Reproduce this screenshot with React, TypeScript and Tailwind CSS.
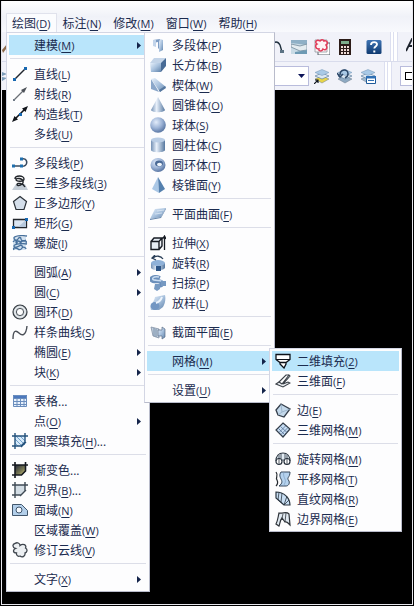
import React, { useState } from 'react';

interface MenuEntry {
  label: string;
  accel?: string;
  suffix?: string;
  icon?: React.ReactNode;
  arrow?: boolean;
  children?: MenuEntry[][];
}

const BLUE = 'url(#steel)';
const BLUE_H = 'url(#steelH)';
const DARK = '#26303c';

function Icon({ children }: { children: React.ReactNode }) {
  return (
    <svg className="size-4 shrink-0" viewBox="0 0 16 16" fill="none" aria-hidden="true">
      {children}
    </svg>
  );
}

// shared gradients for all icons
function Gradients() {
  return (
    <svg className="absolute size-0" aria-hidden="true">
      <defs>
        <linearGradient id="steel" x1="0" y1="0" x2="1" y2="1">
          <stop offset="0" stopColor="#e8f1fb" />
          <stop offset="0.5" stopColor="#a9c2de" />
          <stop offset="1" stopColor="#5f82aa" />
        </linearGradient>
        <linearGradient id="steelH" x1="0" y1="0" x2="1" y2="0">
          <stop offset="0" stopColor="#7390b4" />
          <stop offset="0.4" stopColor="#e9f1fb" />
          <stop offset="1" stopColor="#55779f" />
        </linearGradient>
        <radialGradient id="ball" cx="0.38" cy="0.32" r="0.7">
          <stop offset="0" stopColor="#e2ecfa" />
          <stop offset="0.55" stopColor="#9cb3d6" />
          <stop offset="1" stopColor="#5875a2" />
        </radialGradient>
        <linearGradient id="olive" x1="0" y1="0" x2="1" y2="1">
          <stop offset="0" stopColor="#23283c" />
          <stop offset="0.6" stopColor="#7d7d55" />
          <stop offset="1" stopColor="#e0d890" />
        </linearGradient>
        <linearGradient id="navy" x1="0" y1="0" x2="0" y2="1">
          <stop offset="0" stopColor="#3f74b4" />
          <stop offset="1" stopColor="#0f3a70" />
        </linearGradient>
      </defs>
    </svg>
  );
}

const icons = {
  line: (
    <Icon>
      <path d="M2 14 14 2" stroke="#20262e" strokeWidth="1.5" />
      <path d="M1 12h3v3H1zM12 1h3v3h-3z" fill="#1767b0" />
    </Icon>
  ),
  ray: (
    <Icon>
      <path d="M2 14 12 4" stroke="#6a6f76" strokeWidth="1.3" />
      <path d="m15 1-6 3 3 3z" fill="#4c5158" />
      <path d="M1 13h2v2H1z" fill="#707a86" />
    </Icon>
  ),
  xline: (
    <Icon>
      <path d="M3 13 13 3" stroke="#10141a" strokeWidth="1.6" />
      <path d="m16 0-6 2.500 3.500 3.500zM0 16l6-2.500L2.500 10z" fill="#10141a" />
      <path d="M7 7h3v3H7z" fill="#1767b0" />
    </Icon>
  ),
  pline: (
    <Icon>
      <path d="M1 11h8M9 4c7-2 7 6 3 7l-3 .3" stroke="#38495e" strokeWidth="1.6" />
      <path d="M0 9.500h3v3H0zM8 9.500h3v3H8zM8 2.500h3v3H8z" fill="#1e6fae" />
    </Icon>
  ),
  pline3d: (
    <Icon>
      <path d="M4 9h9l3 6H0z" fill="#c3ccd6" />
      <path d="M3 4c0-4 9-4 9 0 0 3-8 3-8 .5C4 3 10 3 11 6c1 4-6 6-6 3.500C5 7.500 11 8 13 12" stroke="#20242a" strokeWidth="1.400" />
    </Icon>
  ),
  polygon: (
    <Icon>
      <path d="m8 1.500 6.500 5-2.500 8H4l-2.500-8z" fill="#d5dfeb" stroke="#2b3138" strokeWidth="1.2" />
    </Icon>
  ),
  rect: (
    <Icon>
      <path d="M1.500 4.500h13v8h-13z" fill="#dce6f2" stroke="#22262c" strokeWidth="1.3" />
      <path d="M14 5v7H6z" fill="#b6c8dc" />
      <path d="M13 3h3v3h-3zM0 11h3v3H0z" fill="#1767b0" />
    </Icon>
  ),
  helix: (
    <Icon>
      <path d="M1 2h13v13H1z" fill="#d3e2f0" />
      <path
        d="M15 1C9 0 2 1 2 3s3 3 4 1 3-2 3 0 3 2 5 1M1 7c2-3 5 0 4 1s-2-2 1-2 4 3 3 3-1-3 2-3 4 0 3 2M15 9c-4-1-13 0-13 2s4 1 5 0 4-1 3 1M2 15c-2-3 3-2 4-1s3 1 4-1 4 0 4 1"
        stroke="#47709c"
        strokeWidth="1.300"
      />
    </Icon>
  ),
  donut: (
    <Icon>
      <circle cx="8" cy="8" r="7" fill="#c9d0d6" stroke="#343a40" strokeWidth="1.200" />
      <circle cx="8" cy="8" r="5.200" stroke="#f1f4f6" />
      <circle cx="8" cy="8" r="3.600" fill="#fdfdfe" stroke="#4d545b" />
    </Icon>
  ),
  spline: (
    <Icon>
      <path d="M1 15C1 6 4 6 7 9s7 3 8-7" stroke="#4b5058" strokeWidth="1.400" />
    </Icon>
  ),
  table: (
    <Icon>
      <path d="M1 2h14v12H1z" fill="#e8f1fc" />
      <path d="M1 2h14v3H1z" fill="#4c78bd" />
      <path d="M1.500 2.500h13v11h-13zM1 5.500h14M1 8.500h14M1 11.500h14M5 5v9M8.500 5v9M12 5v9" stroke="#6a8dbd" />
    </Icon>
  ),
  hatch: (
    <Icon>
      <path d="M3 3h10v6l-4 4H3z" fill="#d7eafa" />
      <path d="m4 3 9 9M8 3l5 5M3 6l7 7M3 10l3 3" stroke="#73a3cd" />
      <path d="M3 0v16M0 3h16M13 0v9l-4 4H0M9 14l5-5" stroke="#24527c" strokeWidth="1.400" />
    </Icon>
  ),
  gradient: (
    <Icon>
      <path d="M3 3h11v6l-4 4H3z" fill="url(#olive)" />
      <path d="M3 0v16M0 3h16M13.500 0v9l-4 4H0" stroke="#14181f" strokeWidth="1.600" />
    </Icon>
  ),
  boundary: (
    <Icon>
      <path d="M3 3h10v6l-4 4H3z" fill="#d3dde5" />
      <path d="M3 0v16M0 3h16M13 0v9l-4 4H0M8 14l6-6" stroke="#3f4a55" strokeWidth="1.400" />
    </Icon>
  ),
  region: (
    <Icon>
      <path d="M.5 2.500h9l6 6v5H.5z" fill="#b3cfea" stroke="#41566c" />
      <circle cx="7" cy="8" r="3" fill="#f4f9ff" stroke="#41566c" />
    </Icon>
  ),
  cloud: (
    <Icon>
      <path
        d="M3.500 6.500C.5 6 0 2 3 1.500 5 0 8 1 8 3.500 11 1 15 3 13.500 6c2.500 1.500 1.500 4.500-.5 5 .5 3-2.500 5-5 3-2 1-4-1-3.500-3C1 11 .5 8 3.500 6.500z"
        fill="#eceff2"
        stroke="#3f464e"
        strokeWidth="1.300"
      />
    </Icon>
  ),
  polysolid: (
    <Icon>
      <path d="m3 3 7-1v8l-2 2V5L3 6z" fill="#7d9cc4" />
      <path d="m10 2 3 1v10l-4 2V5z" fill={BLUE} />
      <path d="M3 3h3v7l-3-1z" fill="#c2d4ea" />
    </Icon>
  ),
  box: (
    <Icon>
      <path d="m0 6 4-5h12l-4 5z" fill="#c3d4e8" />
      <path d="M0 6h11v9H1z" fill={BLUE} />
      <path d="m11 6 5-5v8l-5 6z" fill="#476a95" />
    </Icon>
  ),
  wedge: (
    <Icon>
      <path d="M1 2v10l8 3z" fill="#8ba7ca" />
      <path d="m1 2 4-1 11 9-6 5z" fill={BLUE} />
      <path d="m9 13 6-4 1 2-6 4z" fill="#55779f" />
    </Icon>
  ),
  cone: (
    <Icon>
      <path d="M8 0 15 13c-1 3-13 3-14 0z" fill={BLUE_H} />
    </Icon>
  ),
  sphere: (
    <Icon>
      <circle cx="8" cy="8" r="7.800" fill="url(#ball)" />
    </Icon>
  ),
  cylinder: (
    <Icon>
      <path d="M1 3v10c0 3 14 3 14 0V3z" fill={BLUE_H} />
      <ellipse cx="8" cy="3" rx="7" ry="2.500" fill="#b9cde5" />
    </Icon>
  ),
  torus: (
    <Icon>
      <ellipse cx="8" cy="8" rx="7.500" ry="7" fill="url(#ball)" />
      <ellipse cx="9" cy="6.500" rx="4" ry="3" fill="#4a6a96" />
      <ellipse cx="9.500" cy="7.500" rx="2.500" ry="1.800" fill="#f2f7fd" />
    </Icon>
  ),
  pyramid: (
    <Icon>
      <path d="M8 0 2 12l7 4z" fill="#abc8e6" />
      <path d="m8 0 7 12-6 4z" fill="#5480ae" />
    </Icon>
  ),
  planar: (
    <Icon>
      <path d="m5 3 11-1-5 9-11 2z" fill={BLUE} />
      <path d="m0 13 11-2 5-9v1l-5 9-11 2z" fill="#6484aa" />
      <path d="m7 5 7-1M5 8l7-1" stroke="#e3ecf7" strokeWidth="0.700" />
    </Icon>
  ),
  extrude: (
    <Icon>
      <path d="M1 6.500h8v8H1zM1 6.500 4 3h8L9 6.500M12 3v8l-3 3.500" fill="#e6edf5" stroke="#171c24" strokeWidth="1.400" />
      <path d="M14.500 15V2M12.500 4l2-3 1.500 3" stroke="#171c24" strokeWidth="1.300" />
    </Icon>
  ),
  revolve: (
    <Icon>
      <path d="M1 8v5c2 3 12 3 14 0V8z" fill={BLUE_H} />
      <ellipse cx="8" cy="8" rx="7" ry="3" fill="#8fb1d8" />
      <path d="M6 11h5v5H6z" fill="#2d5587" />
      <path d="M3 3c3-3 8-2 10 1M5 0 2 3l4 2" stroke="#2a3e57" strokeWidth="1.300" />
    </Icon>
  ),
  sweep: (
    <Icon>
      <path d="M10 3C2 0-1 5 3 6s8-1 9 2-4 3-6 3" stroke="#6b8fbb" strokeWidth="4" />
      <path d="M9 2C3 1 1 4 4 5s8 0 8 2" stroke="#c9dcf1" strokeWidth="1.500" />
      <path d="M5 9h5v5l-3 2-3-2zM11 6h5v5h-5z" fill="#7699c2" />
    </Icon>
  ),
  loft: (
    <Icon>
      <path d="M5 2 15 0c1 4 0 9-2 12l-4 3H1C-1 10 4 8 5 2z" fill={BLUE} />
      <ellipse cx="5" cy="11" rx="4.500" ry="4" fill="#7296c2" />
      <path d="M6 8c3-1 5-3 6-6" stroke="#edf4fc" strokeWidth="2" />
    </Icon>
  ),
  section: (
    <Icon>
      <path d="m1 3 8 2v9l-6-2z" fill="#c2cfdd" stroke="#8191a4" strokeWidth="0.800" />
      <path d="M4 4v8M6 5v8" stroke="#7890aa" />
      <path d="M8 6h4V3l3 2v8l-3 2v-3H8z" fill={BLUE} stroke="#5b6f88" strokeWidth="0.700" />
    </Icon>
  ),
  solid2d: (
    <Icon>
      <path d="M1 1.500h14v5l-4 3H5l-4-3zM5 9.500h6V11l-2 4-4-4z" fill="#fff" stroke="#0d1118" strokeWidth="1.300" />
      <path d="M1 6.500h14" stroke="#0d1118" />
    </Icon>
  ),
  face3d: (
    <Icon>
      <path d="m1 11 3-2 3 2 7-9 1 1-7 8 5-2 2 1-7 4z" fill="#eef1f4" stroke="#3b4148" strokeWidth="1.100" />
      <path d="m4 9 7-7 3 0" stroke="#3b4148" strokeWidth="1.100" />
    </Icon>
  ),
  edge: (
    <Icon>
      <path d="m1 8 5-6 9 5-6 8-6-2z" fill="#c3d8ea" stroke="#343e4a" strokeWidth="1.300" />
      <path d="m6 2 1 8 8-3M7 10l-4 3" stroke="#93acc4" strokeWidth="0.800" />
    </Icon>
  ),
  mesh3d: (
    <Icon>
      <path d="m8 1 7 6-7 8-7-7z" fill="#c8def4" stroke="#343e4a" strokeWidth="1.200" />
      <path d="m5.500 4.500 6.500 6M3.500 6.500 10 13M10.500 4 4 10.500M12.500 6 6 12.500" stroke="#587496" strokeWidth="0.800" />
    </Icon>
  ),
  revMesh: (
    <Icon>
      <path d="M1 10c0-5 3-8 7-8s7 3 7 8" fill="#e2ebf3" stroke={DARK} strokeWidth="1.200" />
      <circle cx="4" cy="10.500" r="3" fill="#fff" stroke={DARK} strokeWidth="1.200" />
      <circle cx="12" cy="10.500" r="3" fill="#fff" stroke={DARK} strokeWidth="1.200" />
      <path d="M6 8V3M10 8V3M7 9h2M4 8V4M12 8V4M4 8v5M12 8v5" stroke={DARK} strokeWidth="0.800" />
    </Icon>
  ),
  tabMesh: (
    <Icon>
      <path d="M6 1h9c0 6-4 5-1 9 1 3-1 5-3 5H4c4-3 3-5 2-7s-2-4 0-7z" fill="#b5d2ee" stroke="#36475a" />
      <path d="M1 1c3 4-1 5 1 8 1 2 1 4-1 6" stroke="#23282e" strokeWidth="1.200" />
      <path d="M9 1c-1 3 0 5 1 7s0 5-2 7" stroke="#7d9dc0" strokeWidth="0.700" />
    </Icon>
  ),
  ruleMesh: (
    <Icon>
      <path d="M1 1c8 0 14 6 14 13H9L1 7z" fill="#c8def3" stroke="#2c3742" strokeWidth="1.200" />
      <path d="m9 14-3-3 1-9M9 14 3 9 4 1M9 14l3-9M9 14l5-5" stroke="#2c3742" strokeWidth="0.800" />
    </Icon>
  ),
  edgeMesh: (
    <Icon>
      <path d="M4 2c4 1 7-2 10 1l1 11c-2-2-3-4-5-3l-3-4c-2 2-2 6-3 8l-3-2c2-4 2-7 3-11z" fill="#dfe8f0" stroke="#30353b" strokeWidth="1.200" />
      <path d="m8 3-1 4M11 2l-1 9" stroke="#30353b" strokeWidth="0.800" />
    </Icon>
  ),
};

const meshMenu: MenuEntry[][] = [
  [
    { label: '二维填充', accel: '2', icon: icons.solid2d },
    { label: '三维面', accel: 'F', icon: icons.face3d },
  ],
  [
    { label: '边', accel: 'E', icon: icons.edge },
    { label: '三维网格', accel: 'M', icon: icons.mesh3d },
  ],
  [
    { label: '旋转网格', accel: 'M', icon: icons.revMesh },
    { label: '平移网格', accel: 'T', icon: icons.tabMesh },
    { label: '直纹网格', accel: 'R', icon: icons.ruleMesh },
    { label: '边界网格', accel: 'E', icon: icons.edgeMesh },
  ],
];

const modelMenu: MenuEntry[][] = [
  [
    { label: '多段体', accel: 'P', icon: icons.polysolid },
    { label: '长方体', accel: 'B', icon: icons.box },
    { label: '楔体', accel: 'W', icon: icons.wedge },
    { label: '圆锥体', accel: 'O', icon: icons.cone },
    { label: '球体', accel: 'S', icon: icons.sphere },
    { label: '圆柱体', accel: 'C', icon: icons.cylinder },
    { label: '圆环体', accel: 'T', icon: icons.torus },
    { label: '棱锥面', accel: 'Y', icon: icons.pyramid },
  ],
  [{ label: '平面曲面', accel: 'F', icon: icons.planar }],
  [
    { label: '拉伸', accel: 'X', icon: icons.extrude },
    { label: '旋转', accel: 'R', icon: icons.revolve },
    { label: '扫掠', accel: 'P', icon: icons.sweep },
    { label: '放样', accel: 'L', icon: icons.loft },
  ],
  [{ label: '截面平面', accel: 'E', icon: icons.section }],
  [{ label: '网格', accel: 'M', arrow: true, children: meshMenu }],
  [{ label: '设置', accel: 'U', arrow: true }],
];

const drawMenu: MenuEntry[][] = [
  [{ label: '建模', accel: 'M', arrow: true, children: modelMenu }],
  [
    { label: '直线', accel: 'L', icon: icons.line },
    { label: '射线', accel: 'R', icon: icons.ray },
    { label: '构造线', accel: 'T', icon: icons.xline },
    { label: '多线', accel: 'U' },
  ],
  [
    { label: '多段线', accel: 'P', icon: icons.pline },
    { label: '三维多段线', accel: '3', icon: icons.pline3d },
    { label: '正多边形', accel: 'Y', icon: icons.polygon },
    { label: '矩形', accel: 'G', icon: icons.rect },
    { label: '螺旋', accel: 'I', icon: icons.helix },
  ],
  [
    { label: '圆弧', accel: 'A', arrow: true },
    { label: '圆', accel: 'C', arrow: true },
    { label: '圆环', accel: 'D', icon: icons.donut },
    { label: '样条曲线', accel: 'S', icon: icons.spline },
    { label: '椭圆', accel: 'E', arrow: true },
    { label: '块', accel: 'K', arrow: true },
  ],
  [
    { label: '表格', suffix: '...', icon: icons.table },
    { label: '点', accel: 'O', arrow: true },
    { label: '图案填充', accel: 'H', suffix: '...', icon: icons.hatch },
  ],
  [
    { label: '渐变色', suffix: '...', icon: icons.gradient },
    { label: '边界', accel: 'B', suffix: '...', icon: icons.boundary },
    { label: '面域', accel: 'N', icon: icons.region },
    { label: '区域覆盖', accel: 'W' },
    { label: '修订云线', accel: 'V', icon: icons.cloud },
  ],
  [{ label: '文字', accel: 'X', arrow: true }],
];

const menuBar: MenuEntry[] = [
  { label: '绘图', accel: 'D', children: drawMenu },
  { label: '标注', accel: 'N' },
  { label: '修改', accel: 'M' },
  { label: '窗口', accel: 'W' },
  { label: '帮助', accel: 'H' },
];

function Label({ entry }: { entry: MenuEntry }) {
  return (
    <span className="pt-0.5 whitespace-nowrap">
      {entry.label}
      <span className="text-[11px]">
        {entry.accel && (
          <>
            (<u className="underline-offset-2">{entry.accel}</u>)
          </>
        )}
      </span>
      {entry.suffix}
    </span>
  );
}

function Menu({ groups, open, width, place }: { groups: MenuEntry[][]; open: string; width: string; place: string }) {
  const [active, setActive] = useState(open);

  return (
    <ul
      role="menu"
      className={`absolute z-10 border border-[#d3d6e4] border-r-[#b9bccb] border-b-[#b9bccb] bg-[#fdfdfe] p-0.5 ${width} ${place}`}
    >
      {groups.map((group, g) => (
        <React.Fragment key={g}>
          {g > 0 && (
            <li role="separator" className="flex h-[9px] items-start px-px pt-[3px]">
              <span className="h-px w-full bg-[#dcdee8]" />
            </li>
          )}
          {group.map((entry) => {
            const key = entry.label;
            const isActive = key === active;
            return (
              <li key={key} role="none" className="relative" onMouseEnter={() => setActive(key)}>
                <button
                  role="menuitem"
                  className={`flex h-5 w-full items-center gap-1.5 pr-1.5 pl-[3px] text-left ${isActive ? 'bg-[#b9e5fb]' : ''}`}
                >
                  {entry.icon || <span className="size-4 shrink-0" />}
                  <Label entry={entry} />
                  {entry.arrow && (
                    <svg className="ml-auto h-[7px] w-1" viewBox="0 0 4 7" aria-hidden="true">
                      <path d="M0 0v7l4-3.500z" fill="#14244a" />
                    </svg>
                  )}
                </button>
                {isActive && entry.children === modelMenu && (
                  <Menu groups={modelMenu} open="网格" width="w-[131px]" place="-top-[3px] left-[calc(100%-3px)]" />
                )}
                {isActive && entry.children === meshMenu && (
                  <Menu groups={meshMenu} open="二维填充" width="w-[133px]" place="-top-[3px] left-[calc(100%-3px)]" />
                )}
              </li>
            );
          })}
        </React.Fragment>
      ))}
    </ul>
  );
}

function MenuBar() {
  return (
    <nav className="flex h-[31px] items-end bg-linear-to-b from-white via-[#f0f2f8] to-[#f8f9fd] pl-1">
      {menuBar.map((entry) => (
        <div key={entry.label} className="relative">
          <button
            className={`flex h-[19px] items-center px-1.5 ${entry.children ? 'border-x border-t border-[#e0e2ec] bg-[#fbfcfe] px-[5px]' : ''}`}
          >
            <Label entry={entry} />
          </button>
          {entry.children && <Menu groups={entry.children} open="建模" width="w-36" place="top-full left-0" />}
        </div>
      ))}
    </nav>
  );
}

function ToolButton({ label, children }: { label: string; children: React.ReactNode }) {
  return (
    <button aria-label={label} className="shrink-0">
      <Icon>{children}</Icon>
    </button>
  );
}

function Grip() {
  return (
    <span className="flex h-full w-2 shrink-0 justify-between border-x border-[#dcdff0] bg-white px-0.5">
      <span className="w-px bg-[#dcdff0]" />
    </span>
  );
}

// three stacked layer sheets, bottom one tinted
function Sheets({ bottom }: { bottom: string }) {
  return (
    <>
      <path d="m1 11 7-3 7 3-7 4z" fill={bottom} stroke="#6d7c8c" strokeWidth="0.500" />
      <path d="m1 8 7-3 7 3-7 3z" fill="#dbe7f2" stroke="#5f7f9f" strokeWidth="0.700" />
      <path d="m1 4.500 7-3 7 3-7 3z" fill="#a9c9e6" stroke="#7395b5" strokeWidth="0.500" />
    </>
  );
}

function Toolbars() {
  return (
    <div className="bg-[#f1f2f9]">
      <div className="flex h-[30px] items-center border-b border-[#d9dcec]">
        <div className="flex flex-1 items-center">
          <ToolButton label="画笔">
            <path d="m0 11 5-6 2 1-6 8z" fill="#8c6a4a" />
          </ToolButton>
        </div>
        <div className="flex items-center gap-[7px]">
          <ToolButton label="追踪">
            <path d="M5 6c1-4 5-4 7 0l2 7M6 4l-4 9" stroke="#20303e" strokeWidth="1.400" />
            <path d="M12 11h4v3h-4zM4 3h3v3H4z" fill="#5c7384" />
          </ToolButton>
          <ToolButton label="图纸集">
            <path d="M0 1h16v14H0z" fill="#c9dbe6" />
            <path d="M0 1h16v5L0 4z" fill="#8fb0c6" />
            <path d="m0 5 9 2 7-2v6l-7 1L0 8z" fill="#e4ecf0" stroke="#728a9a" strokeWidth="0.800" />
            <path d="m4 13 12-2v4H4z" fill="#6d9ab4" />
          </ToolButton>
          <ToolButton label="标记集">
            <path d="M4 4h12v12H4z" fill="#fff" stroke="#59616a" />
            <path d="M1 1h12v12H1z" fill="#fdf3f5" stroke="#8f979f" strokeWidth="0.800" />
            <path d="M3 5c-3-2 0-5 3-3 2-2 4-1 4 0 4-1 4 3 2 4 2 3 0 6-3 4-1 3-5 2-4 0-4 0-4-4-2-5z" stroke="#e23a58" strokeWidth="1.500" />
          </ToolButton>
          <ToolButton label="计算器">
            <path d="M2 0h12v16H2z" fill="#2c1c18" />
            <path d="M4 2h8v3H4z" fill="#7fae8b" />
            <path d="M4 7h2v2H4zM7 7h2v2H7zM10 7h2v2h-2zM4 10h2v2H4zM7 10h2v2H7zM10 10h2v2h-2zM4 13h2v2H4zM7 13h2v2H7zM10 13h2v2h-2z" fill="#f0dcd6" />
          </ToolButton>
        </div>
        <div className="mr-2 ml-[13px] flex items-center">
          <ToolButton label="帮助">
            <rect x="0.500" y="1" width="15" height="14" rx="1.500" fill="url(#navy)" />
            <path d="M5 6c0-4 6.500-3.500 6-.5-.3 2-2.700 2-2.700 4" stroke="#fff" strokeWidth="1.800" />
            <path d="M7.300 11.500h2v2h-2z" fill="#fff" />
          </ToolButton>
        </div>
        <Grip />
        <div className="ml-2 w-1.5 overflow-hidden">
          <ToolButton label="文字样式">
            <path d="m0 14 6-12h2v12M3 9h5" stroke="#1c222c" strokeWidth="1.800" />
          </ToolButton>
        </div>
      </div>
      <div className="flex h-7 items-center">
        <ToolButton label="图层特性">
          <path d="m0 4 5 2-5 2zM0 9l5 1-5 3z" fill="#7c9cb8" />
        </ToolButton>
        <div className="relative ml-2 h-5 flex-1">
          <select aria-label="图层" className="h-full w-full appearance-none border border-[#b9bcdc] bg-white">
            <option></option>
          </select>
          <svg className="pointer-events-none absolute top-2 right-1 h-1 w-[7px]" viewBox="0 0 7 4" aria-hidden="true">
            <path d="M0 0h7L3.500 4z" fill="#0c1458" />
          </svg>
        </div>
        <div className="mr-2 ml-[5px] flex items-center gap-[7px]">
          <ToolButton label="置为当前图层">
            <Sheets bottom="#e8d548" />
            <path d="m0 16 4-4M1 12h3v3" stroke="#10161e" strokeWidth="1.200" />
          </ToolButton>
          <ToolButton label="上一个图层">
            <Sheets bottom="#8ea9c2" />
            <path d="M3 7C3 1 11 0 11 6c0 2-1 3-3 4M0 5l3 4 3-3" stroke="#2b4768" strokeWidth="1.500" />
          </ToolButton>
          <ToolButton label="图层状态">
            <Sheets bottom="#9db8d0" />
            <path d="M6.500 8.500h9v7h-9z" fill="#fff" stroke="#1f5a9a" />
            <path d="M6 8h10v2.500H6z" fill="#2f6fb4" />
            <path d="M8 12.500h6" stroke="#2f6fb4" />
          </ToolButton>
        </div>
        <Grip />
        <div className="ml-2 flex h-5 w-3 items-center overflow-hidden border-y border-l border-[#b9bcdc] bg-white pl-1">
          <span className="size-2 shrink-0 border border-r-0 border-black" />
        </div>
      </div>
    </div>
  );
}

export default function App() {
  return (
    <div className="min-h-screen overflow-hidden bg-black p-px font-['Open_Sans','Noto_Sans_CJK_SC',sans-serif] text-xs text-[#1b2b4f]">
      <Gradients />
      <div className="flex min-h-[calc(100vh-2px)] flex-col border-x border-b border-[#e8e8ee]">
        <MenuBar />
        <Toolbars />
        <main className="flex-1 bg-black" />
      </div>
    </div>
  );
}
